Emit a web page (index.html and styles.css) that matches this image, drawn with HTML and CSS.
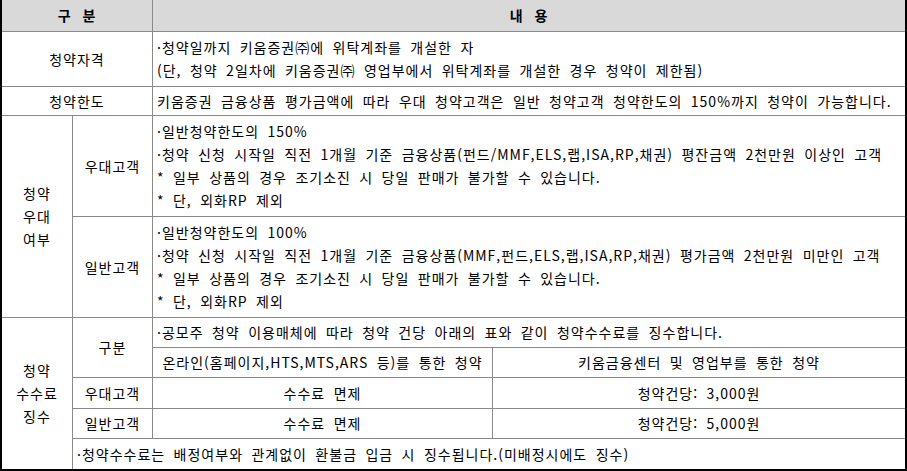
FILE: index.html
```html
<!DOCTYPE html>
<html lang="ko">
<head>
<meta charset="utf-8">
<title>청약 안내</title>
<link rel="stylesheet" href="styles.css">
</head>
<body>
<div class="sheet">
  <div class="cell head span-label">구 분</div>
  <div class="cell head span-body">내 용</div>

  <div class="cell center span-label">청약자격</div>
  <div class="cell left span-body">
    <p>·청약일까지 키움증권㈜에 위탁계좌를 개설한 자</p>
    <p>(단, 청약 2일차에 키움증권㈜ 영업부에서 위탁계좌를 개설한 경우 청약이 제한됨)</p>
  </div>

  <div class="cell center span-label">청약한도</div>
  <div class="cell left span-body">
    <p>키움증권 금융상품 평가금액에 따라 우대 청약고객은 일반 청약고객 청약한도의 150%까지 청약이 가능합니다.</p>
  </div>

  <div class="cell center group-pref">청약<br>우대<br>여부</div>
  <div class="cell center col2">우대고객</div>
  <div class="cell left span-body">
    <p>·일반청약한도의 150%</p>
    <p>·청약 신청 시작일 직전 1개월 기준 금융상품(펀드/MMF,ELS,랩,ISA,RP,채권) 평잔금액 2천만원 이상인 고객</p>
    <p>* 일부 상품의 경우 조기소진 시 당일 판매가 불가할 수 있습니다.</p>
    <p>* 단, 외화RP 제외</p>
  </div>
  <div class="cell center col2">일반고객</div>
  <div class="cell left span-body">
    <p>·일반청약한도의 100%</p>
    <p>·청약 신청 시작일 직전 1개월 기준 금융상품(MMF,펀드,ELS,랩,ISA,RP,채권) 평가금액 2천만원 미만인 고객</p>
    <p>* 일부 상품의 경우 조기소진 시 당일 판매가 불가할 수 있습니다.</p>
    <p>* 단, 외화RP 제외</p>
  </div>

  <div class="cell center group-fee">청약<br>수수료<br>징수</div>
  <div class="cell center col2 fee-kind">구분</div>
  <div class="cell left span-body">
    <p>·공모주 청약 이용매체에 따라 청약 건당 아래의 표와 같이 청약수수료를 징수합니다.</p>
  </div>
  <div class="cell center col3">온라인(홈페이지,HTS,MTS,ARS 등)를 통한 청약</div>
  <div class="cell center col4">키움금융센터 및 영업부를 통한 청약</div>

  <div class="cell center col2">우대고객</div>
  <div class="cell center col3">수수료 면제</div>
  <div class="cell center col4">청약건당: 3,000원</div>

  <div class="cell center col2">일반고객</div>
  <div class="cell center col3">수수료 면제</div>
  <div class="cell center col4">청약건당: 5,000원</div>

  <div class="cell left span-note">
    <p>·청약수수료는 배정여부와 관계없이 환불금 입금 시 징수됩니다.(미배정시에도 징수)</p>
  </div>
</div>
</body>
</html>
```
FILE: styles.css
```css
html, body {
  margin: 0;
  padding: 0;
  background: #ffffff;
}

.sheet {
  display: grid;
  grid-template-columns: 70px 79px 339px 412px;
  grid-template-rows: 31px 54px 28px 100px 100px 29px 29px 30px 29px 30px;
  gap: 1px;
  width: 903px;
  background: #8a8a8a;
  border: 2px solid #000000;
  border-top: 0;
  font-family: "Noto Sans CJK KR", "Noto Sans", sans-serif;
  font-size: 14px;
  letter-spacing: 1px;
  word-spacing: 3.5px;
  color: #000000;
}

.cell {
  background: #ffffff;
  display: flex;
  align-items: center;
  line-height: 23px;
  white-space: nowrap;
}

.cell p {
  margin: 0;
}

.head {
  background: #d9d9d9;
  justify-content: center;
  font-weight: bold;
  word-spacing: 6px;
}

.center {
  justify-content: center;
  text-align: center;
}

.left {
  flex-direction: column;
  align-items: flex-start;
  justify-content: center;
  padding-left: 4px;
}

.span-label { grid-column: 1 / 3; }
.span-body { grid-column: 3 / 5; }
.span-note { grid-column: 2 / 5; }
.col2 { grid-column: 2; }
.col3 { grid-column: 3; }
.col4 { grid-column: 4; }

.group-pref {
  grid-column: 1;
  grid-row: 4 / 6;
}

.group-fee {
  grid-column: 1;
  grid-row: 6 / 11;
}

.fee-kind {
  grid-row: 6 / 8;
}
```
